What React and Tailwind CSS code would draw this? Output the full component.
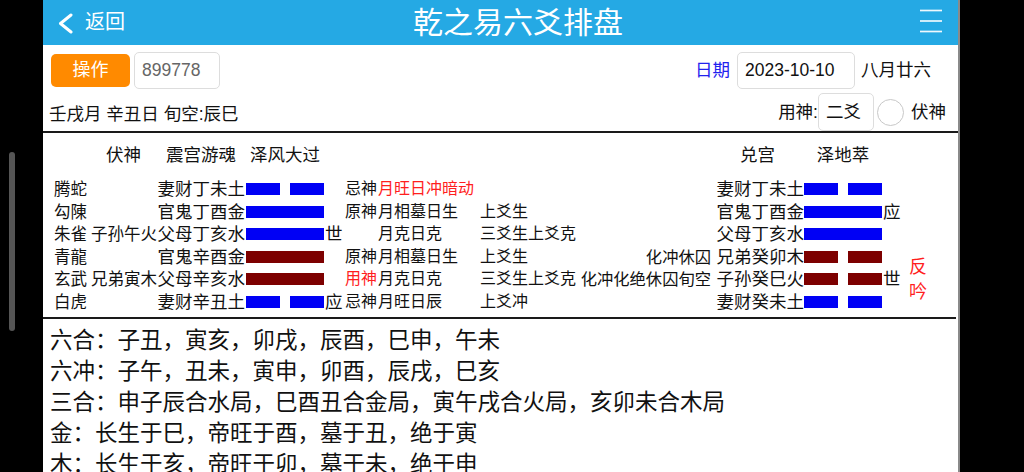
import React from "react";

const ROWS = [
  { ls: "腾蛇", fu: "", ben: "妻财丁未土", bc: "b", bs: false, bm: "", role: "忌神", roleRed: false, st: "月旺日冲暗动", stRed: true, h: "", i: "", bian: "妻财丁未土", vc: "b", vs: false, vm: "" },
  { ls: "勾陳", fu: "", ben: "官鬼丁酉金", bc: "b", bs: true, bm: "", role: "原神", roleRed: false, st: "月相墓日生", stRed: false, h: "上爻生", i: "", bian: "官鬼丁酉金", vc: "b", vs: true, vm: "应" },
  { ls: "朱雀", fu: "子孙午火", ben: "父母丁亥水", bc: "b", bs: true, bm: "世", role: "", roleRed: false, st: "月克日克", stRed: false, h: "三爻生上爻克", i: "", bian: "父母丁亥水", vc: "b", vs: true, vm: "" },
  { ls: "青龍", fu: "", ben: "官鬼辛酉金", bc: "r", bs: true, bm: "", role: "原神", roleRed: false, st: "月相墓日生", stRed: false, h: "上爻生", i: "化冲休囚", bian: "兄弟癸卯木", vc: "r", vs: false, vm: "" },
  { ls: "玄武", fu: "兄弟寅木", ben: "父母辛亥水", bc: "r", bs: true, bm: "", role: "用神", roleRed: true, st: "月克日克", stRed: false, h: "三爻生上爻克", i: "化冲化绝休囚旬空", bian: "子孙癸巳火", vc: "r", vs: false, vm: "世" },
  { ls: "白虎", fu: "", ben: "妻财辛丑土", bc: "b", bs: false, bm: "应", role: "忌神", roleRed: false, st: "月旺日辰", stRed: false, h: "上爻冲", i: "", bian: "妻财癸未土", vc: "b", vs: false, vm: "" },
];

function Bar({ color, solid }) {
  const bg = color === "b" ? "bg-[#0000f5]" : "bg-[#7d0000]";
  if (solid) {
    return (
      <div className="w-[78px] h-[12px] flex">
        <div className={`w-full h-full ${bg}`} />
      </div>
    );
  }
  return (
    <div className="w-[78px] h-[12px] flex justify-between">
      <div className={`w-[34px] h-full ${bg}`} />
      <div className={`w-[34px] h-full ${bg}`} />
    </div>
  );
}

const BOTTOM = [
  "六合：子丑，寅亥，卯戌，辰酉，巳申，午未",
  "六冲：子午，丑未，寅申，卯酉，辰戌，巳亥",
  "三合：申子辰合水局，巳酉丑合金局，寅午戌合火局，亥卯未合木局",
  "金：长生于巳，帝旺于酉，墓于丑，绝于寅",
  "木：长生于亥，帝旺于卯，墓于未，绝于申",
  "水：长生于申，帝旺于子，墓于辰，绝于巳",
  "火：长生于寅，帝旺于午，墓于戌，绝于亥",
];

export default function App() {
  return (
    <div className="w-[1024px] h-[472px] overflow-hidden bg-black flex font-['Liberation_Sans','Noto_Sans_CJK_SC',sans-serif] text-[#111]">
      {/* left black edge with scroll indicator */}
      <div className="w-[43px] shrink-0 pl-[9px] pt-[152px]">
        <div className="w-[6px] h-[179px] rounded-full bg-[#555]" />
      </div>

      {/* app panel */}
      <div className="w-[917px] shrink-0 bg-white border-r-2 border-[#8a8a8a] flex flex-col">
        {/* header */}
        <div className="h-[45px] shrink-0 bg-[#25a9e4] flex items-center text-white">
          <div className="w-[370px] flex items-center pl-[13px]">
            <svg width="18" height="22" viewBox="0 0 18 22" fill="none">
              <path d="M15 3 L4.5 11.5 L15 20" stroke="white" strokeWidth="3" strokeLinecap="round" strokeLinejoin="round" />
            </svg>
            <span className="ml-[11px] text-[20px] leading-[45px]">返回</span>
          </div>
          <span className="text-[30px] leading-[45px] whitespace-nowrap">乾之易六爻排盘</span>
          <div className="flex-1 flex justify-end pr-[16px]">
            <svg width="22" height="45" viewBox="0 0 22 45">
              <line x1="0" y1="10.5" x2="22" y2="10.5" stroke="white" strokeOpacity="0.92" strokeWidth="1.7" />
              <line x1="0" y1="21" x2="22" y2="21" stroke="white" strokeOpacity="0.92" strokeWidth="1.7" />
              <line x1="0" y1="31.5" x2="22" y2="31.5" stroke="white" strokeOpacity="0.92" strokeWidth="1.7" />
            </svg>
          </div>
        </div>

        {/* row 1 */}
        <div className="mt-[6px] h-[38px] shrink-0 flex items-center pl-[8px] pr-[27px]">
          <div className="w-[79px] h-[33px] bg-[#ff8a00] rounded-[5px] text-white text-[18px] flex items-center justify-center">操作</div>
          <div className="ml-[4px] w-[86px] h-[37px] border border-[#dddddd] rounded-[5px] pl-[7px] text-[17.5px] text-[#666] flex items-center">899778</div>
          <div className="ml-auto flex items-center text-[17.5px]">
            <span className="text-[#2222ee]">日期</span>
            <div className="ml-[7px] w-[118px] h-[37px] border border-[#dddddd] rounded-[5px] pl-[7px] flex items-center">2023-10-10</div>
            <span className="ml-[6px]">八月廿六</span>
          </div>
        </div>

        {/* row 2 */}
        <div className="mt-[4px] h-[38px] shrink-0 flex items-center pl-[6px] pr-[12px] text-[17.5px]">
          <span className="mt-[4px] whitespace-pre">壬戌月 辛丑日 旬空:辰巳</span>
          <div className="ml-auto flex items-center">
            <span>用神:</span>
            <div className="w-[56px] h-[38px] border border-[#dddddd] rounded-[5px] pl-[7px] flex items-center">二爻</div>
            <div className="ml-[3px] w-[27px] h-[27px] rounded-full border-[1.5px] border-[#c8c8c8]" />
            <span className="ml-[7px]">伏神</span>
          </div>
        </div>

        <div className="h-[2px] shrink-0 bg-[#1a1a1a]" />

        {/* hexagram section */}
        <div className="pt-[11px] pl-[11px] shrink-0">
          <div className="h-[22.5px] flex items-center text-[17.5px] leading-[22.5px] whitespace-nowrap">
            <div className="w-[36px]" />
            <div className="w-[67px] text-center">伏神</div>
            <div className="w-[88px] text-center">震宫游魂</div>
            <div className="ml-[1px] w-[78px] flex justify-center">泽风大过</div>
            <div className="w-[387px]" />
            <div className="w-[93px] text-center">兑宫</div>
            <div className="w-[78px] flex justify-center">泽地萃</div>
          </div>

          <div className="mt-[11.5px] flex">
            <div className="flex flex-col">
              {ROWS.map((r, k) => (
                <div key={k} className="h-[22.5px] flex items-center leading-[22.5px] whitespace-nowrap">
                  <div className="w-[36px] text-[16.5px]">{r.ls}</div>
                  <div className="w-[67px] text-[16.5px] text-right">{r.fu}</div>
                  <div className="w-[88px] text-[17.5px] text-right">{r.ben}</div>
                  <div className="ml-[1px]">
                    <Bar color={r.bc} solid={r.bs} />
                  </div>
                  <div className="w-[21px] pl-[1px] text-[17.5px]">{r.bm}</div>
                  <div className={`w-[33px] text-[16px] ${r.roleRed ? "text-[#ff1e1e]" : ""}`}>{r.role}</div>
                  <div className={`w-[102px] text-[16px] ${r.stRed ? "text-[#ff1e1e]" : ""}`}>{r.st}</div>
                  <div className="w-[100px] text-[16px]">{r.h}</div>
                  <div className="w-[131px] text-[16.3px] text-right">{r.i}</div>
                  <div className="w-[93px] text-[17.5px] text-right">{r.bian}</div>
                  <Bar color={r.vc} solid={r.vs} />
                  <div className="w-[22px] pl-[1px] text-[17.5px]">{r.vm}</div>
                </div>
              ))}
            </div>
            <div className="pl-[5px] pt-[77px] text-[18px] leading-[25px] text-[#ff1e1e] flex flex-col">
              <span>反</span>
              <span>吟</span>
            </div>
          </div>
        </div>

        <div className="mt-[4px] mr-[2px] h-[2px] shrink-0 bg-[#1a1a1a]" />

        {/* bottom text */}
        <div className="pt-[5.5px] pl-[7px] text-[22.5px] leading-[31px] whitespace-nowrap">
          {BOTTOM.map((t, k) => (
            <div key={k}>{t}</div>
          ))}
        </div>
      </div>
    </div>
  );
}
